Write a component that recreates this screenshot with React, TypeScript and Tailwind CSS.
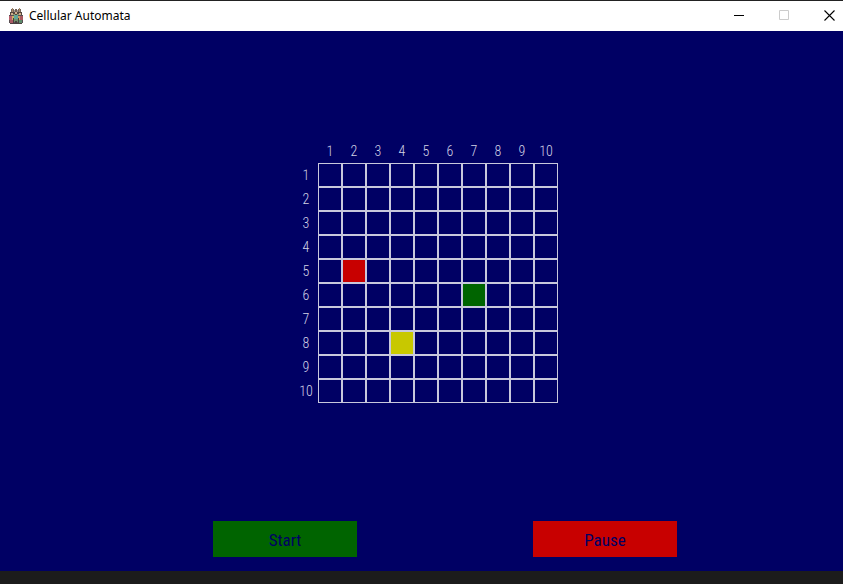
const SIZE = Array.from({ length: 10 }, (_, i) => i + 1);

const CELLS: Record<string, string> = {
  '5-2': 'bg-[#c80000]',
  '6-7': 'bg-[#006400]',
  '8-4': 'bg-[#c8c800]',
};

function AppIcon() {
  return (
    <svg width="16" height="18" viewBox="0 0 16 18" shapeRendering="crispEdges" aria-hidden="true">
      <path d="M3 2h3v4H3zM10 2h3v4h-3z" fill="#75665a" />
      <path d="M4 1h1v4H4zM11 1h1v4h-1z" fill="#a98a6a" />
      <path d="M6 3h4v3H6z" fill="#a59a94" />
      <path d="M7 2h2v3H7z" fill="#6f6058" />
      <path d="M2 5h12v4H2z" fill="#54463e" />
      <path d="M3 6h2v2H3zM7 5h2v2H7zM11 6h2v2h-2z" fill="#cfae8c" />
      <path d="M5 7h2v2H5zM9 7h2v2H9z" fill="#8f9a70" />
      <path d="M1 8h14v8H1z" fill="#5a5054" />
      <path d="M1 9h3v4H1z" fill="#b8606c" />
      <path d="M4 9h2v4H4z" fill="#c9b464" />
      <path d="M6 8h4v4H6z" fill="#5fa79a" />
      <path d="M10 9h2v4h-2z" fill="#cf9a62" />
      <path d="M12 9h3v4h-3z" fill="#a8585f" />
      <path d="M2 13h3v3H2z" fill="#a85a64" />
      <path d="M6 12h4v3H6z" fill="#70906a" />
      <path d="M11 13h3v3h-3z" fill="#5d8a6c" />
      <path d="M5 11h1v5H5zM10 11h1v5h-1zM2 16h12v1H2zM7 14h2v2H7z" fill="#4a4040" />
    </svg>
  );
}

function TitleBar() {
  return (
    <header className="flex h-[31px] shrink-0 items-center border-t border-[#222] bg-white pl-2">
      <AppIcon />
      <h1 className="ml-[5px] flex-1 font-['Noto_Sans',sans-serif] text-[12px] leading-4 text-black">
        Cellular Automata
      </h1>
      <div className="flex h-full pb-0.5 text-black">
        <button aria-label="Minimize" className="flex w-[45px] items-center justify-center">
          <svg width="11" height="11" viewBox="0 0 11 11" shapeRendering="crispEdges">
            <path d="M0 5h10v1H0z" fill="currentColor" />
          </svg>
        </button>
        <button aria-label="Maximize" disabled className="flex w-[45px] items-center justify-center text-[#ccc]">
          <svg width="11" height="11" viewBox="0 0 11 11" fill="none" stroke="currentColor">
            <path d="M.5 .5h9v9h-9z" />
          </svg>
        </button>
        <button aria-label="Close" className="-mr-[9px] flex w-[45px] items-center justify-center">
          <svg width="11" height="11" viewBox="0 0 11 11" stroke="currentColor" strokeWidth="1.1">
            <path d="M.5 .5l10 10M10.5 .5l-10 10" />
          </svg>
        </button>
      </div>
    </header>
  );
}

function Board() {
  return (
    <table className="table-fixed border-separate border-spacing-0 text-center text-[14px] leading-4 text-[#d4d4e6]">
      <thead>
        <tr className="h-6">
          <td className="w-6 p-0" />
          {SIZE.map((col) => (
            <th key={col} scope="col" className="w-6 p-0 font-light">
              {col}
            </th>
          ))}
        </tr>
      </thead>
      <tbody>
        {SIZE.map((row) => (
          <tr key={row} className="h-6">
            <th scope="row" className="p-0 font-light">
              {row}
            </th>
            {SIZE.map((col) => (
              <td key={col} className={`border border-[#c8c8dc] p-0 ${CELLS[`${row}-${col}`] ?? ''}`} />
            ))}
          </tr>
        ))}
      </tbody>
    </table>
  );
}

export default function App() {
  return (
    <div className="flex min-h-screen flex-col bg-[#1c1c1c] font-['Roboto_Condensed','Liberation_Sans',sans-serif]">
      <TitleBar />
      <main className="mb-[13px] flex flex-1 flex-col bg-[#000064] pt-[108px] pb-[14px]">
        <div className="flex justify-center pl-[9px]">
          <Board />
        </div>
        <div className="mt-auto flex justify-center gap-44 pl-[47px] text-[17px] leading-6 text-[#000064]">
          <button className="h-9 w-36 bg-[#006400] pt-0.5">Start</button>
          <button className="h-9 w-36 bg-[#c80000] pt-0.5">Pause</button>
        </div>
      </main>
    </div>
  );
}
